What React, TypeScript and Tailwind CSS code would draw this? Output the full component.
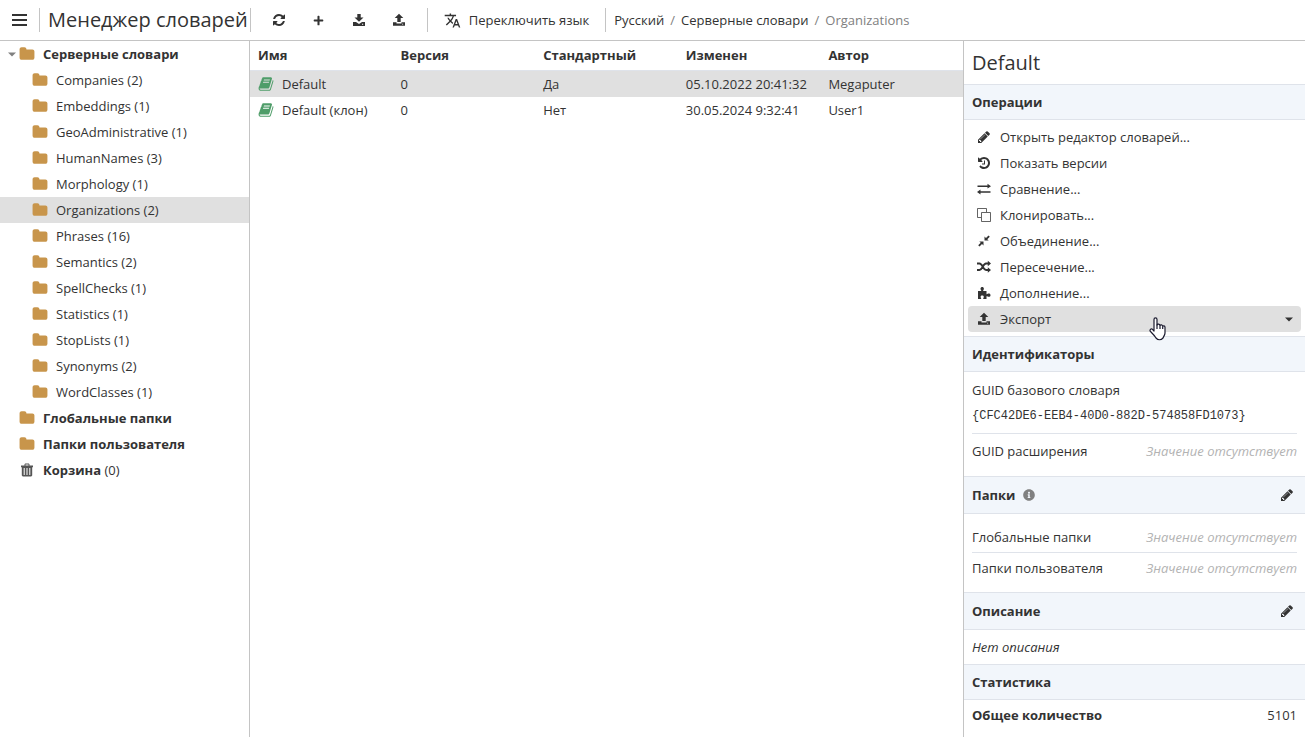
import type { ReactNode } from "react";
import { FaInfoCircle, FaPlus } from "react-icons/fa";
import { MdTranslate } from "react-icons/md";

const PATHS = {
  refresh:
    "M1639 1056q0 5-1 7-64 268-268 434.5t-478 166.5q-146 0-282.5-55t-243.5-157l-129 129q-19 19-45 19t-45-19-19-45v-448q0-26 19-45t45-19h448q26 0 45 19t19 45-19 45l-137 137q71 66 161 102t187 36q134 0 250-65t186-179q11-17 53-117 8-23 30-23h192q13 0 22.5 9.5t9.5 22.5zm25-800v448q0 26-19 45t-45 19h-448q-26 0-45-19t-19-45 19-45l138-138q-148-137-349-137-134 0-250 65t-186 179q-11 17-53 117-8 23-30 23h-199q-13 0-22.5-9.5t-9.5-22.5v-7q65-268 270-434.5t480-166.5q146 0 284 55.5t245 156.5l130-129q19-19 45-19t45 19 19 45z",
  pencil:
    "M491 1536l91-91-235-235-91 91v107h128v128h107zm523-928q0-22-22-22-10 0-17 7l-542 542q-7 7-7 17 0 22 22 22 10 0 17-7l542-542q7-7 7-17zm-54-192l416 416-832 832h-416v-416zm683 96q0 53-37 90l-166 166-416-416 166-165q36-38 90-38 53 0 91 38l235 234q37 39 37 91z",
  history:
    "M1664 896q0 156-61 298t-164 245-245 164-298 61q-172 0-327-72.5t-264-204.5q-7-10-6.5-22.5t8.5-20.5l137-138q10-9 25-9 16 2 23 12 73 95 179 147t225 52q104 0 198.5-40.5t163.5-109.5 109.5-163.5 40.5-198.5-40.5-198.5-109.5-163.5-163.5-109.5-198.5-40.5q-98 0-188 35.5t-160 101.5l137 138q31 30 14 69-17 40-59 40h-448q-26 0-45-19t-19-45v-448q0-42 40-59 39-17 69 14l130 129q107-101 244.5-156.5t284.5-55.5q156 0 298 61t245 164 164 245 61 298zm-640-288v448q0 14-9 23t-23 9h-320q-14 0-23-9t-9-23v-64q0-14 9-23t23-9h224v-352q0-14 9-23t23-9h64q14 0 23 9t9 23z",
  folder:
    "M1728 608v704q0 92-66 158t-158 66h-1216q-92 0-158-66t-66-158v-960q0-92 66-158t158-66h320q92 0 158 66t66 158v32h672q92 0 158 66t66 158z",
  book: "M1703 478q40 57 18 129l-275 906q-19 64-76.5 107.5t-122.5 43.5h-923q-77 0-148.5-53.5t-99.5-131.5q-24-67-2-127 0-4 3-27t4-37q1-8-3-21.5t-3-19.5q2-11 8-21t16.5-23.5 16.5-23.5q23-38 45-91.5t30-91.5q3-10 .5-30t-.5-28q3-11 17-28t17-23q21-36 42-92t25-90q1-9-2.5-32t.5-28q4-13 22-30.5t22-22.5q19-26 42.5-84.5t27.5-96.5q1-8-3-25.5t-2-26.5q2-8 9-18t18-23 17-21q8-12 16.5-30.5t15-35 16-36 19.5-32 26.5-23.5 36-11.5 47.5 5.5l-1 3q38-9 51-9h761q74 0 114 56t18 130l-274 906q-36 119-71.5 153.5t-128.5 34.5h-869q-27 0-38 15-11 16-1 43 24 70 144 70h923q29 0 56-15.5t35-41.5l300-987q7-22 5-57 38 15 59 43zm-1064 2q-4 13 2 22.5t20 9.5h608q13 0 25.5-9.5t16.5-22.5l21-64q4-13-2-22.5t-20-9.5h-608q-13 0-25.5 9.5t-16.5 22.5zm-83 256q-4 13 2 22.5t20 9.5h608q13 0 25.5-9.5t16.5-22.5l21-64q4-13-2-22.5t-20-9.5h-608q-13 0-25.5 9.5t-16.5 22.5z",
};

function Glyph({ name, className = "size-[14px]" }: { name: keyof typeof PATHS; className?: string }) {
  return (
    <svg viewBox="0 0 1792 1792" fill="currentColor" className={`shrink-0 ${className}`} aria-hidden="true">
      <path d={PATHS[name]} />
    </svg>
  );
}

function Small({ children }: { children: ReactNode }) {
  return (
    <svg viewBox="0 0 14 14" fill="currentColor" className="size-[14px] shrink-0" aria-hidden="true">
      {children}
    </svg>
  );
}

const DownloadIcon = () => (
  <Small>
    <path d="M5.300 1h3.400v3.500H11.500L7 8.800 2.500 4.500h2.800z" />
    <path d="M1 9h3L7 11 10 9h3v4H1zM10 10.800v.9h1.200v-.9z" fillRule="evenodd" />
  </Small>
);
const UploadIcon = () => (
  <Small>
    <path d="M7 .8l4.300 4.200H8.700v4H5.300V5H2.700z" />
    <path d="M1 9.300h3.500V10.500h5V9.300H13v3.500H1zM10 10.800v.8h1.200v-.8z" fillRule="evenodd" />
  </Small>
);
const ExchangeIcon = () => (
  <Small>
    <path d="M.5 3.500H10.500V1.800L14 4.200 10.500 6.600V5H.5zM13.500 9.300H3.500V7.600L0 10l3.500 2.400V10.800h10z" />
  </Small>
);
const CloneIcon = () => (
  <Small>
    <path
      d="M4.500 4.500h9v9h-9zM9.500 4V.5h-9v9H4"
      fill="none"
      stroke="currentColor"
      strokeWidth="0.900"
      opacity="0.850"
    />
  </Small>
);
const CompressIcon = () => (
  <Small>
    <path d="M7.500 2.500v4h4.200L10.300 5.200 12.800 2.700 11.500 1.500 9 4zM6.500 11.500v-4H2.300l1.400 1.300L1.200 11.300l1.300 1.200L5 10z" />
  </Small>
);
const ShuffleIcon = () => (
  <Small>
    <path
      d="M0 3.500h2.500C5.500 3.500 6 10 9 10h2.500M0 10h2.500C5.500 10 6 3.500 9 3.500h2.500"
      fill="none"
      stroke="currentColor"
      strokeWidth="1.800"
    />
    <path d="M10.800 .800L14 3.500l-3.200 2.700zM10.800 7.300L14 10l-3.200 2.700z" />
  </Small>
);
const PuzzleIcon = () => (
  <Small>
    <path d="M1 5h3.200c.3-.7-.7-1.200-.7-2.300C3.500 1.500 4.300 1 5.200 1s1.700.5 1.700 1.700c0 1.100-1 1.600-.7 2.300H9.500v3.200c.7.300 1.200-.6 2.300-.6 1 0 1.700.7 1.700 1.600s-.7 1.600-1.700 1.600c-1.100 0-1.600-.9-2.300-.6V13H6.300c-.4-.6.500-1.200.5-2 0-.9-.7-1.400-1.600-1.400s-1.600.5-1.600 1.400c0 .8.900 1.400.5 2H1z" />
  </Small>
);
const TrashIcon = () => (
  <Small>
    <path d="M1 2.500h3.500V1.200L5.200.5h3.600l.7.7V2.500H13V4.200H1zM5.500 1.500v1h3v-1z" fillRule="evenodd" />
    <path
      d="M1.800 4h10.400v8.500l-1 1H2.800l-1-1zM3.700 5v7h1V5zM6.500 5v7h1V5zM9.300 5v7h1V5z"
      fillRule="evenodd"
    />
  </Small>
);
const CaretIcon = ({ className }: { className: string }) => (
  <svg viewBox="0 0 8 5" fill="currentColor" className={className} aria-hidden="true">
    <path d="M0 .500h8L4 4.500z" />
  </svg>
);

const folders = [
  "Companies (2)",
  "Embeddings (1)",
  "GeoAdministrative (1)",
  "HumanNames (3)",
  "Morphology (1)",
  "Organizations (2)",
  "Phrases (16)",
  "Semantics (2)",
  "SpellChecks (1)",
  "Statistics (1)",
  "StopLists (1)",
  "Synonyms (2)",
  "WordClasses (1)",
];

const columns = ["Имя", "Версия", "Стандартный", "Изменен", "Автор"];
const rows = [
  ["Default", "0", "Да", "05.10.2022 20:41:32", "Megaputer"],
  ["Default (клон)", "0", "Нет", "30.05.2024 9:32:41", "User1"],
];

const operations: { label: string; icon: ReactNode }[] = [
  { label: "Открыть редактор словарей...", icon: <Glyph name="pencil" /> },
  { label: "Показать версии", icon: <Glyph name="history" /> },
  { label: "Сравнение...", icon: <ExchangeIcon /> },
  { label: "Клонировать...", icon: <CloneIcon /> },
  { label: "Объединение...", icon: <CompressIcon /> },
  { label: "Пересечение...", icon: <ShuffleIcon /> },
  { label: "Дополнение...", icon: <PuzzleIcon /> },
];

function Divider() {
  return <div className="h-6 w-px shrink-0 bg-[#c4c4c4]" />;
}

function ToolButton({ label, children }: { label: string; children: ReactNode }) {
  return (
    <button type="button" aria-label={label} className="flex h-8 w-10 items-center justify-center">
      {children}
    </button>
  );
}

function SectionHeader({ title, info, editable }: { title: string; info?: boolean; editable?: boolean }) {
  return (
    <div
      className={`flex items-center border-y border-[#dfe3ea] bg-[#f2f6fb] px-2 ${editable ? "h-[38px]" : "h-9"}`}
    >
      <h3 className="font-bold">{title}</h3>
      {info && <FaInfoCircle className="ml-2 size-3 text-[#808080]" />}
      {editable && (
        <button type="button" aria-label={`Изменить: ${title}`} className="ml-auto px-[3px]">
          <Glyph name="pencil" />
        </button>
      )}
    </div>
  );
}

function Missing() {
  return <dd className="text-[#b3b3b3] italic">Значение отсутствует</dd>;
}

export default function App() {
  return (
    <div className="flex min-h-screen flex-col bg-white font-['Open_Sans','Noto_Sans',sans-serif] text-[13px] leading-[26px] text-[#333]">
      <header className="flex h-[41px] items-center border-b border-[#c4c4c4]">
        <button type="button" aria-label="Меню" className="flex h-8 w-[39px] items-center justify-center">
          <svg viewBox="0 0 15 12" fill="currentColor" className="h-3 w-[15px]" aria-hidden="true">
            <path d="M0 0h15v2H0zM0 5h15v2H0zM0 10h15v2H0z" />
          </svg>
        </button>
        <Divider />
        <h1 className="pr-[2px] pl-2 text-xl whitespace-nowrap">Менеджер словарей</h1>
        <Divider />
        <div className="flex px-2">
          <ToolButton label="Обновить">
            <Glyph name="refresh" />
          </ToolButton>
          <ToolButton label="Создать">
            <FaPlus className="size-[11px]" />
          </ToolButton>
          <ToolButton label="Импорт">
            <DownloadIcon />
          </ToolButton>
          <ToolButton label="Экспорт">
            <UploadIcon />
          </ToolButton>
        </div>
        <Divider />
        <button type="button" className="flex items-center gap-2 px-4 whitespace-nowrap">
          <MdTranslate className="size-[17px]" />
          Переключить язык
        </button>
        <Divider />
        <nav className="flex gap-[6px] px-2 whitespace-nowrap" aria-label="Путь">
          <a href="#russian">Русский</a>
          <span className="text-[#808080]">/</span>
          <a href="#server">Серверные словари</a>
          <span className="text-[#808080]">/</span>
          <span className="text-[#808080]">Organizations</span>
        </nav>
      </header>

      <div className="flex grow">
        <aside className="w-[250px] shrink-0 border-r border-[#c4c4c4]">
          <ul>
            <li>
              <div className="flex items-center pl-2 font-bold">
                <CaretIcon className="mr-[3px] h-[5px] w-2 text-[#808080]" />
                <Glyph name="folder" className="mr-2 size-4 text-[#c8954b]" />
                Серверные словари
              </div>
              <ul>
                {folders.map((name) => (
                  <li
                    key={name}
                    className={`flex items-center gap-2 pl-8 ${name.startsWith("Organizations") ? "bg-[#e0e0e0]" : ""}`}
                  >
                    <Glyph name="folder" className="size-4 text-[#c8954b]" />
                    {name}
                  </li>
                ))}
              </ul>
            </li>
            {["Глобальные папки", "Папки пользователя"].map((name) => (
              <li key={name} className="flex items-center gap-2 pl-[19px] font-bold">
                <Glyph name="folder" className="size-4 text-[#c8954b]" />
                {name}
              </li>
            ))}
            <li className="flex items-center gap-2 pl-[19px]">
              <span className="flex w-4 justify-center text-[#555]">
                <TrashIcon />
              </span>
              <span>
                <b>Корзина</b> (0)
              </span>
            </li>
          </ul>
        </aside>

        <main className="min-w-0 grow">
          <table className="w-full table-fixed">
            <thead>
              <tr className="h-[29px] border-b border-[#dfe3ea] text-left">
                {columns.map((name) => (
                  <th key={name} className="pl-2 font-bold">
                    {name}
                  </th>
                ))}
              </tr>
            </thead>
            <tbody>
              {rows.map((row, index) => (
                <tr key={row[0]} className={index === 0 ? "bg-[#e0e0e0]" : ""}>
                  {row.map((cell, column) => (
                    <td key={columns[column]} className="pl-2 whitespace-nowrap">
                      {column === 0 ? (
                        <span className="flex items-center gap-2">
                          <Glyph name="book" className="size-4 text-[#4f9d69]" />
                          {cell}
                        </span>
                      ) : (
                        cell
                      )}
                    </td>
                  ))}
                </tr>
              ))}
            </tbody>
          </table>
        </main>

        <aside className="w-[342px] shrink-0 border-l border-[#c4c4c4]">
          <h2 className="flex h-[43px] items-center px-2 text-xl">Default</h2>

          <SectionHeader title="Операции" />
          <ul className="p-1">
            {operations.map(({ label, icon }) => (
              <li key={label}>
                <button type="button" className="flex w-full items-center gap-2 pl-2 text-left">
                  <span className="flex w-4 justify-center">{icon}</span>
                  {label}
                </button>
              </li>
            ))}
            <li className="relative">
              <button type="button" className="flex w-full items-center gap-2 rounded-sm bg-[#e0e0e0] px-2 text-left">
                <span className="flex w-4 justify-center">
                  <UploadIcon />
                </span>
                Экспорт
                <CaretIcon className="ml-auto h-[5px] w-2" />
              </button>
              <svg
                viewBox="0 0 17 24"
                className="pointer-events-none absolute top-[11px] right-[135px] h-6 w-[17px]"
                aria-hidden="true"
              >
                <path
                  d="M5 14V2.500C5 .3 8 .3 8 2.500V8c.3-1.200 2.700-1.200 3 .5.5-1 2.500-.8 2.700.8.600-.8 2.300-.5 2.300 1V16c0 2-1.500 3.500-2 5-2 2.300-5 2.300-7 0-1.500-2.500-3.500-4.500-5.500-6.500-1.300-1.500.5-3.300 2-2.200z"
                  fill="#fff"
                  stroke="#1a1a2e"
                  strokeWidth="1.200"
                  strokeLinejoin="round"
                />
                <path d="M8 7.500V12M11 8.500V12M13.700 9.500V12" stroke="#1a1a2e" strokeWidth="1.200" />
              </svg>
            </li>
          </ul>

          <SectionHeader title="Идентификаторы" />
          <dl className="px-2 pt-px pb-2">
            <div className="border-b border-[#dfe3ea] py-1">
              <dt>GUID базового словаря</dt>
              <dd className="font-['Liberation_Mono',monospace] text-xs leading-[26px]">
                {"{CFC42DE6-EEB4-40D0-882D-574858FD1073}"}
              </dd>
            </div>
            <div className="flex justify-between py-1">
              <dt>GUID расширения</dt>
              <Missing />
            </div>
          </dl>

          <SectionHeader title="Папки" info editable />
          <dl className="px-2 pt-2 pb-[9px]">
            <div className="flex justify-between border-b border-[#dfe3ea] py-[2px]">
              <dt>Глобальные папки</dt>
              <Missing />
            </div>
            <div className="flex justify-between py-[2px]">
              <dt>Папки пользователя</dt>
              <Missing />
            </div>
          </dl>

          <SectionHeader title="Описание" editable />
          <p className="px-2 py-1 italic">Нет описания</p>

          <SectionHeader title="Статистика" />
          <dl className="flex justify-between px-2 py-[2px]">
            <dt className="font-bold">Общее количество</dt>
            <dd>5101</dd>
          </dl>
        </aside>
      </div>
    </div>
  );
}
